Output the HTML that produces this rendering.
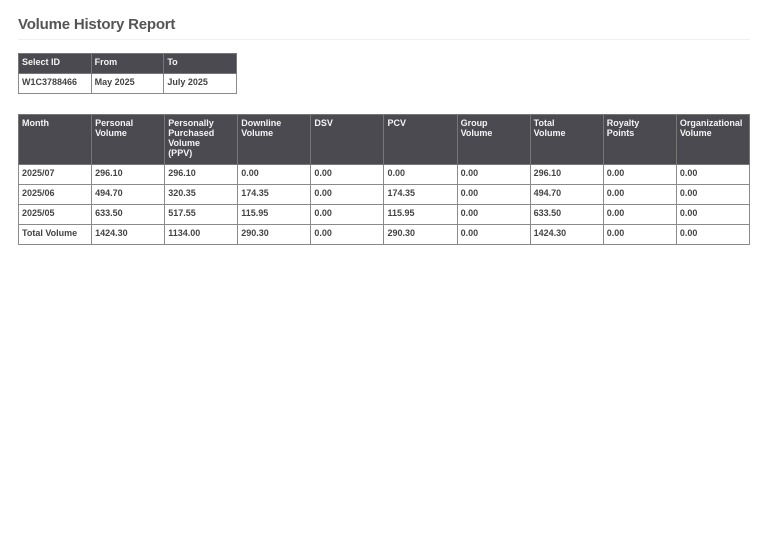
<!DOCTYPE html>
<html><head><style>
body{margin:0;background:#fff;font-family:"Liberation Sans",sans-serif;}
h1{position:absolute;left:18px;top:16px;margin:0;font-size:15px;font-weight:bold;color:#555;letter-spacing:-0.2px}
.hr{position:absolute;left:18px;top:39px;width:732px;height:1px;background:#f0f0f0}
table{position:absolute;border-collapse:collapse;table-layout:fixed;font-size:9px;font-weight:bold;color:#444}
td,th{border:1.5px solid #8a8a8a;padding:0 3px;text-align:left;vertical-align:top;overflow:hidden;white-space:nowrap}
th{background:#4b4a51;color:#f4f4f4;border-color:#777;line-height:10px;padding-top:3px}
td{height:19px;line-height:17px;}
#t1{left:18px;top:53px;width:219px}
#t1 th{height:16px}
#t2{left:18px;top:114px;width:732px}
#t2 th{height:46px}
</style></head><body>
<h1>Volume History Report</h1>
<div class="hr"></div>
<table id="t1"><tr><th>Select ID</th><th>From</th><th>To</th></tr>
<tr><td>W1C3788466</td><td>May 2025</td><td>July 2025</td></tr></table>
<table id="t2">
<tr><th>Month</th><th>Personal<br>Volume</th><th>Personally<br>Purchased<br>Volume<br>(PPV)</th><th>Downline<br>Volume</th><th>DSV</th><th>PCV</th><th>Group<br>Volume</th><th>Total<br>Volume</th><th>Royalty<br>Points</th><th>Organizational<br>Volume</th></tr>
<tr><td>2025/07</td><td>296.10</td><td>296.10</td><td>0.00</td><td>0.00</td><td>0.00</td><td>0.00</td><td>296.10</td><td>0.00</td><td>0.00</td></tr>
<tr><td>2025/06</td><td>494.70</td><td>320.35</td><td>174.35</td><td>0.00</td><td>174.35</td><td>0.00</td><td>494.70</td><td>0.00</td><td>0.00</td></tr>
<tr><td>2025/05</td><td>633.50</td><td>517.55</td><td>115.95</td><td>0.00</td><td>115.95</td><td>0.00</td><td>633.50</td><td>0.00</td><td>0.00</td></tr>
<tr><td>Total Volume</td><td>1424.30</td><td>1134.00</td><td>290.30</td><td>0.00</td><td>290.30</td><td>0.00</td><td>1424.30</td><td>0.00</td><td>0.00</td></tr>
</table>
</body></html>
